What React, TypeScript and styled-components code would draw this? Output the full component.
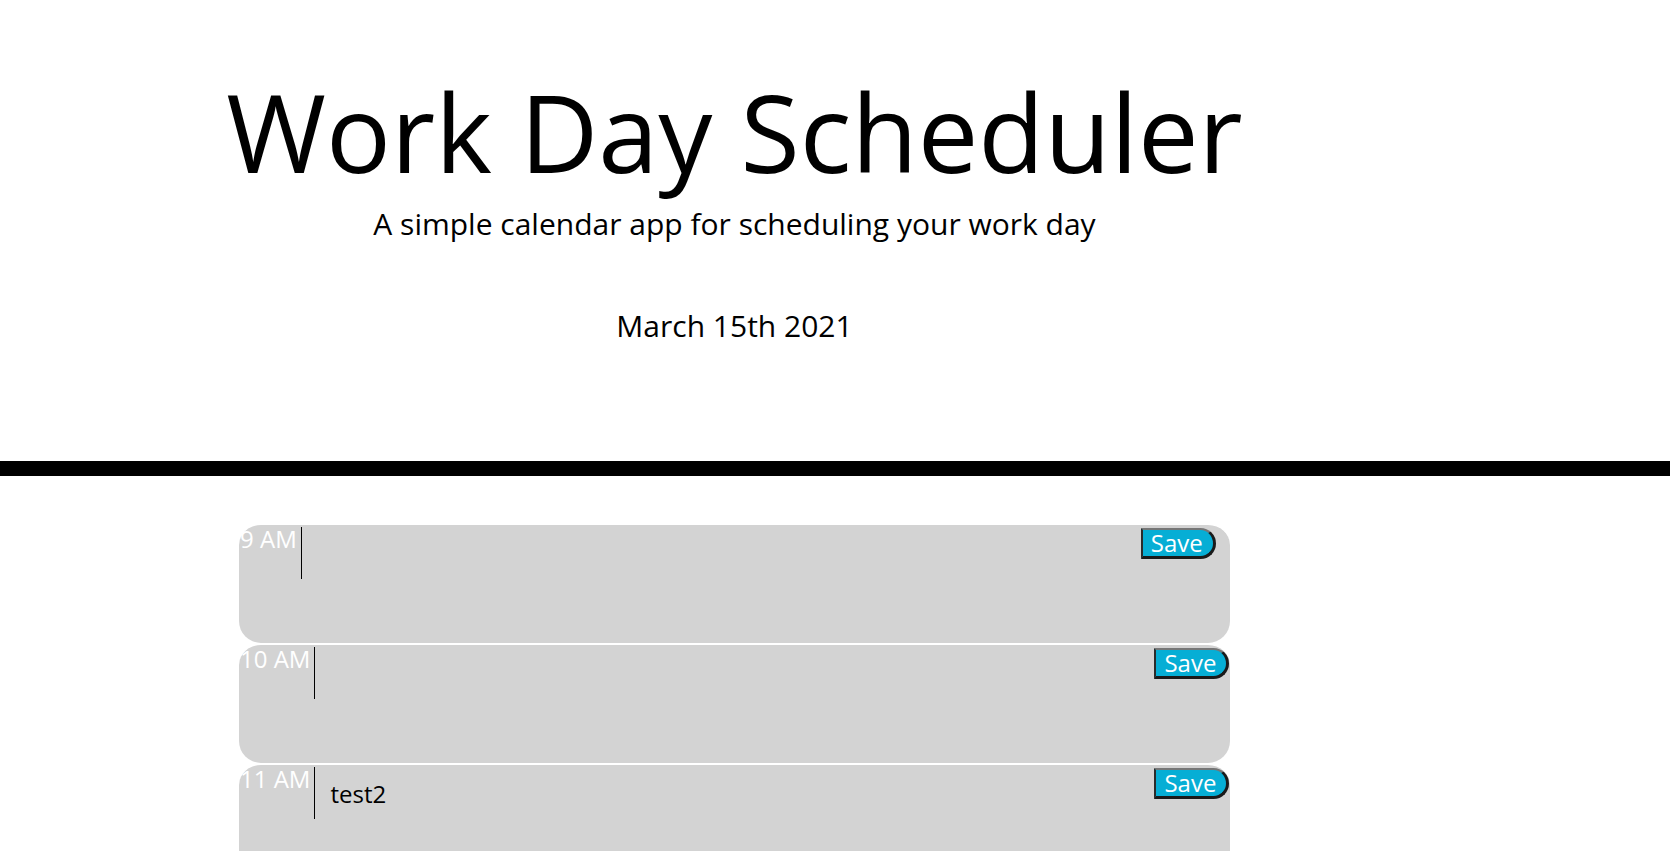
import React from "react";
import styled, { createGlobalStyle } from "styled-components";

const GlobalStyle = createGlobalStyle`
  html {
    scrollbar-width: none;
  }
  html::-webkit-scrollbar {
    display: none;
  }
  body {
    margin: 0;
    background: #ffffff;
    font-family: "Open Sans", "Liberation Sans", sans-serif;
    line-height: 1;
    color: #000000;
  }
  * {
    box-sizing: border-box;
  }
`;

const Header = styled.header`
  padding: 78px 0 120px;
  border-bottom: 15px solid #000000;
`;

const Column = styled.div`
  width: 991px;
  margin-left: 239px;
`;

const HeaderColumn = styled(Column)`
  display: flex;
  flex-direction: column;
  align-items: center;
`;

const Title = styled.h1`
  margin: 0;
  font-size: 108px;
  font-weight: 400;
  line-height: 1;
  white-space: nowrap;
`;

const Lead = styled.p<{ $gap: number }>`
  margin: ${(p) => p.$gap}px 0 0;
  font-size: 30px;
  font-weight: 400;
  line-height: 1;
  white-space: nowrap;
`;

const Main = styled(Column)`
  margin-top: 47px;
`;

const TimeBlock = styled.div`
  display: flex;
  align-items: flex-start;
  gap: 4px;
  height: 120px;
  padding-top: 2px;
  border-top: 2px solid #ffffff;
  border-radius: 22px;
  background: #d3d3d3;
  color: #ffffff;
  white-space: pre-wrap;
`;

const Hour = styled.div`
  padding-left: 1px;
  font-size: 24px;
  line-height: 1;
  white-space: nowrap;
`;

const Description = styled.textarea`
  width: 836px;
  height: 52px;
  padding: 15px;
  border: none;
  border-left: 1.5px solid #000000;
  background: transparent;
  color: #000000;
  font-family: "Open Sans", "Liberation Sans", sans-serif;
  font-size: 24px;
  line-height: 1;
  resize: none;
  overflow: hidden;
  outline: none;
`;

const SaveButton = styled.button`
  margin-top: 1px;
  height: 31px;
  padding: 0 10px 0 8px;
  border-style: solid;
  border-width: 2px 3px 3px 2px;
  border-color: #767676 #1a1a1a #1a1a1a #2b2b2b;
  border-radius: 0 16px 16px 0;
  background: #06aed5;
  color: #ffffff;
  font-family: "Open Sans", "Liberation Sans", sans-serif;
  font-size: 24px;
  line-height: 1;
  cursor: pointer;
`;

const hours = [
  { label: "9 AM", text: "" },
  { label: "10 AM", text: "" },
  { label: "11 AM", text: "test2" },
  { label: "12 PM", text: "" },
  { label: "1 PM", text: "" },
  { label: "2 PM", text: "" },
  { label: "3 PM", text: "" },
  { label: "4 PM", text: "" },
  { label: "5 PM", text: "" },
];

export default function App() {
  return (
    <>
      <GlobalStyle />
      <Header>
        <HeaderColumn>
          <Title>Work Day Scheduler</Title>
          <Lead $gap={23}>A simple calendar app for scheduling your work day</Lead>
          <Lead $gap={72}>March 15th 2021</Lead>
        </HeaderColumn>
      </Header>
      <Main>
        {hours.map((h) => (
          <TimeBlock key={h.label}>
            <Hour>{h.label}</Hour>
            <Description defaultValue={h.text} />
            <SaveButton>Save</SaveButton>
          </TimeBlock>
        ))}
      </Main>
    </>
  );
}
